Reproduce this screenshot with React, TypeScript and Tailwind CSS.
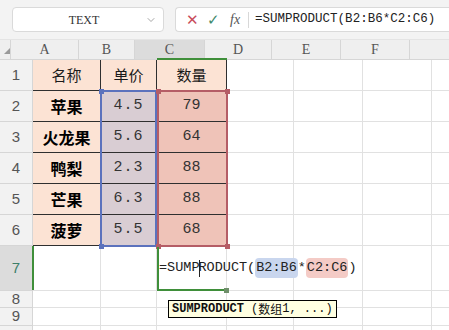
import React from 'react';
import { ChevronDown } from 'lucide-react';

type Cell = { text?: string; cls: string; txt?: string };

const colHeaders = [
  { label: 'A', w: 'w-[68px]', bg: 'bg-[#efefef]' },
  { label: 'B', w: 'w-[56px]', bg: 'bg-[#efefef]' },
  { label: 'C', w: 'w-[70px]', bg: 'bg-[#dcdcdc]' },
  { label: 'D', w: 'w-[67px]', bg: 'bg-[#efefef]' },
  { label: 'E', w: 'w-[69px]', bg: 'bg-[#efefef]' },
  { label: 'F', w: 'w-[69px]', bg: 'bg-[#efefef]' },
  { label: '', w: 'w-[40px]', bg: 'bg-[#efefef]' },
];

const widths = colHeaders.map(c => c.w);

const fruits = [
  ['苹果', '4.5', '79'],
  ['火龙果', '5.6', '64'],
  ['鸭梨', '2.3', '88'],
  ['芒果', '6.3', '88'],
  ['菠萝', '5.5', '68'],
];

const grid = 'border-r border-b border-[#e1e1e1]';
const dark = 'border-r border-b border-[#2f2f2f]';
const cjk = "font-['Noto_Sans_CJK_SC',sans-serif]";
const mono = "font-['Liberation_Mono',monospace]";

const emptyRow = (): Cell[] => widths.map(() => ({ cls: grid }));

const rows: { n: string; h: string; cells: Cell[]; active?: boolean }[] = [
  {
    n: '1',
    h: 'h-[31px]',
    cells: [
      { text: '名称', cls: `${dark} bg-[#fce3d4]`, txt: `${cjk} text-[15px] text-[#1a1a1a]` },
      { text: '单价', cls: `${dark} bg-[#fce3d4]`, txt: `${cjk} text-[15px] text-[#1a1a1a]` },
      { text: '数量', cls: `${dark} bg-[#fce3d4]`, txt: `${cjk} text-[15px] text-[#1a1a1a]` },
      ...emptyRow().slice(3),
    ],
  },
  ...fruits.map(([name, price, qty], i) => ({
    n: String(i + 2),
    h: 'h-[31px]',
    cells: [
      { text: name, cls: `${dark} bg-[#fce3d4]`, txt: `${cjk} text-[16px] font-bold text-black` },
      { text: price, cls: `${dark} bg-[#d9cdd3]`, txt: `${mono} text-[15px] tracking-[1px] text-[#333]` },
      { text: qty, cls: `${dark} bg-[#efc3b8]`, txt: `${mono} text-[15px] text-[#333]` },
      ...emptyRow().slice(3),
    ],
  })),
  { n: '7', h: 'h-[45px]', cells: emptyRow(), active: true },
  { n: '8', h: 'h-[17px]', cells: emptyRow() },
  { n: '9', h: 'h-[18px]', cells: emptyRow() },
  { n: '', h: 'h-[20px]', cells: emptyRow() },
];

const Handle = ({ cls }: { cls: string }) => (
  <div className={`absolute w-[5px] h-[5px] ${cls}`} />
);

const App: React.FC = () => {
  return (
    <div className="w-[449px] h-[330px] overflow-hidden bg-white font-['Liberation_Sans',sans-serif]">
      {/* formula bar */}
      <div className="h-[40px] bg-[#f3f3f3] flex items-center pl-[12px] gap-[11px] border-b border-[#e4e4e4]">
        <div className="w-[152px] h-[25px] bg-white border border-[#dadada] rounded-[4px] flex items-center relative">
          <span className="flex-1 text-center text-[12px] text-[#333] font-['Liberation_Serif',serif] pl-[10px]">TEXT</span>
          <ChevronDown className="w-[12px] h-[12px] text-[#888] mr-[6px]" strokeWidth={1.5} />
        </div>
        <div className="flex-1 h-[25px] bg-white border border-[#dadada] border-r-0 rounded-l-[4px] flex items-center">
          <span className="ml-[10px] text-[#c84c5c] text-[15px] leading-none">✕</span>
          <span className="ml-[8px] text-[#3f8a6c] text-[15px] leading-none">✓</span>
          <span className="ml-[10px] text-[#555] text-[14px] italic font-['Liberation_Serif',serif]">fx</span>
          <div className="ml-[8px] w-px h-[16px] bg-[#d8d8d8]" />
          <span className={`ml-[6px] text-[12.5px] text-[#222] ${mono} whitespace-nowrap`}>=SUMPRODUCT(B2:B6*C2:C6)</span>
        </div>
      </div>

      {/* sheet */}
      <div className="relative">
        <div className="flex h-[20px]">
          <div className="w-[33px] bg-[#efefef] border-r border-b border-[#d6d6d6] flex items-center justify-center">
            <div className="w-0 h-0 border-l-[6px] border-l-transparent border-b-[6px] border-b-[#9a9a9a] ml-[4px] mt-[2px]" />
          </div>
          {colHeaders.map((c, i) => (
            <div
              key={i}
              className={`${c.w} ${c.bg} shrink-0 border-r border-b border-[#d6d6d6] flex items-center justify-center text-[14px] text-[#555] font-['Liberation_Serif',serif]`}
            >
              {c.label}
            </div>
          ))}
        </div>

        {rows.map((r, ri) => (
          <div key={ri} className={`flex ${r.h}`}>
            <div
              className={`w-[33px] shrink-0 border-r border-b border-[#d6d6d6] flex items-center justify-center text-[15px] ${
                r.active ? 'bg-[#dcdcdc] text-[#3d7f6a]' : 'bg-[#f2f2f2] text-[#555]'
              }`}
            >
              {r.n}
            </div>
            {r.cells.map((c, i) =>
              r.active && i === 2 ? (
                <div key={i} className={`${widths[i]} shrink-0 flex items-center justify-start ${c.cls}`}>
                  <div className={`relative z-10 shrink-0 ml-[2px] whitespace-nowrap text-[13.5px] text-[#222] ${mono} flex items-center`}>
                    <span>=SUMP</span>
                    <span className="w-px h-[17px] bg-[#222] -mx-px" />
                    <span>RODUCT(</span>
                    <span className="bg-[#c9d6ee] rounded-[4px] px-[1px]">B2:B6</span>
                    <span>*</span>
                    <span className="bg-[#f4cbc6] rounded-[4px] px-[1px]">C2:C6</span>
                    <span>)</span>
                  </div>
                </div>
              ) : (
                <div key={i} className={`${widths[i]} shrink-0 flex items-center justify-center ${c.cls}`}>
                  {c.text && <span className={c.txt}>{c.text}</span>}
                </div>
              )
            )}
          </div>
        ))}

        {/* column C header selection line */}
        <div className="absolute left-[157px] top-[18px] w-[70px] h-[2px] bg-[#3f8f3a]" />
        {/* row 7 header selection line */}
        <div className="absolute left-[32px] top-[206px] w-[2px] h-[44px] bg-[#3f8f3a]" />

        {/* B2:B6 reference range */}
        <div className="absolute left-[100px] top-[50px] w-[57px] h-[157px] border-2 border-[#5b72bd]" />
        {/* C2:C6 reference range */}
        <div className="absolute left-[157px] top-[50px] w-[71px] h-[157px] border-2 border-[#b55d66]" />
        <Handle cls="left-[99px] top-[49px] bg-[#5b72bd]" />
        <Handle cls="left-[99px] top-[204px] bg-[#5b72bd]" />
        <Handle cls="left-[156px] top-[49px] bg-[#b55d66]" />
        <Handle cls="left-[225px] top-[49px] bg-[#b55d66]" />
        <Handle cls="left-[156px] top-[204px] bg-[#b55d66]" />
        <Handle cls="left-[225px] top-[204px] bg-[#b55d66]" />

        {/* active cell C7 */}
        <div className="absolute left-[157px] top-[207px] w-[2px] h-[44px] bg-[#3f8f3a]" />
        <div className="absolute left-[157px] top-[249px] w-[67px] h-[2px] bg-[#3f8f3a]" />
        <Handle cls="left-[224px] top-[248px] bg-[#6f8f6a]" />

        {/* tooltip */}
        <div className="absolute left-[168px] top-[260px] h-[18px] border border-black bg-[#ffffe1] px-[3px] flex items-center whitespace-nowrap text-[12px] text-[#111] z-20">
          <span className={`${mono} font-bold`}>SUMPRODUCT</span>
          <span className={`${mono} ml-[7px]`}>(</span>
          <span className={`${cjk} text-[12px]`}>数组</span>
          <span className={mono}>1, ...)</span>
        </div>
      </div>
    </div>
  );
};

export default App;
